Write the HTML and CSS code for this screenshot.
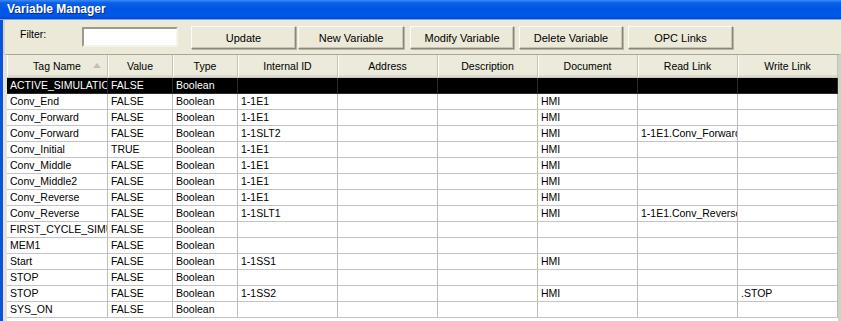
FILE: index.html
```html
<!DOCTYPE html>
<html lang="en">
<head>
  <meta charset="UTF-8" />
  <title>Variable Manager</title>
  <link rel="stylesheet" href="styles.css">
</head>
<body>
  <div class="titlebar">Variable Manager</div>
  <div class="frame">
    <div class="toolbar">
      <label class="filter-label" for="filter">Filter:</label>
      <input type="text" id="filter" class="filter-input" />
      <button class="tb-btn btn-update">Update</button>
      <button class="tb-btn btn-new">New Variable</button>
      <button class="tb-btn btn-modify">Modify Variable</button>
      <button class="tb-btn btn-delete">Delete Variable</button>
      <button class="tb-btn btn-opc">OPC Links</button>
    </div>

    <div class="grid-wrap">
      <table class="grid">
        <colgroup>
          <col class="c-tag" />
          <col class="c-val" />
          <col class="c-type" />
          <col class="c-wide" />
          <col class="c-wide" />
          <col class="c-wide" />
          <col class="c-wide" />
          <col class="c-wide" />
          <col class="c-wide" />
        </colgroup>
        <thead>
          <tr>
            <th class="sorted">Tag Name <span class="sort-arrow"></span></th>
            <th>Value</th>
            <th>Type</th>
            <th>Internal ID</th>
            <th>Address</th>
            <th>Description</th>
            <th>Document</th>
            <th>Read Link</th>
            <th>Write Link</th>
          </tr>
        </thead>
        <tbody>
          <tr class="selected"><td>ACTIVE_SIMULATION</td><td>FALSE</td><td>Boolean</td><td></td><td></td><td></td><td></td><td></td><td></td></tr>
          <tr><td>Conv_End</td><td>FALSE</td><td>Boolean</td><td>1-1E1</td><td></td><td></td><td>HMI</td><td></td><td></td></tr>
          <tr><td>Conv_Forward</td><td>FALSE</td><td>Boolean</td><td>1-1E1</td><td></td><td></td><td>HMI</td><td></td><td></td></tr>
          <tr><td>Conv_Forward</td><td>FALSE</td><td>Boolean</td><td>1-1SLT2</td><td></td><td></td><td>HMI</td><td>1-1E1.Conv_Forward</td><td></td></tr>
          <tr><td>Conv_Initial</td><td>TRUE</td><td>Boolean</td><td>1-1E1</td><td></td><td></td><td>HMI</td><td></td><td></td></tr>
          <tr><td>Conv_Middle</td><td>FALSE</td><td>Boolean</td><td>1-1E1</td><td></td><td></td><td>HMI</td><td></td><td></td></tr>
          <tr><td>Conv_Middle2</td><td>FALSE</td><td>Boolean</td><td>1-1E1</td><td></td><td></td><td>HMI</td><td></td><td></td></tr>
          <tr><td>Conv_Reverse</td><td>FALSE</td><td>Boolean</td><td>1-1E1</td><td></td><td></td><td>HMI</td><td></td><td></td></tr>
          <tr><td>Conv_Reverse</td><td>FALSE</td><td>Boolean</td><td>1-1SLT1</td><td></td><td></td><td>HMI</td><td>1-1E1.Conv_Reverse</td><td></td></tr>
          <tr><td>FIRST_CYCLE_SIMULATION</td><td>FALSE</td><td>Boolean</td><td></td><td></td><td></td><td></td><td></td><td></td></tr>
          <tr><td>MEM1</td><td>FALSE</td><td>Boolean</td><td></td><td></td><td></td><td></td><td></td><td></td></tr>
          <tr><td>Start</td><td>FALSE</td><td>Boolean</td><td>1-1SS1</td><td></td><td></td><td>HMI</td><td></td><td></td></tr>
          <tr><td>STOP</td><td>FALSE</td><td>Boolean</td><td></td><td></td><td></td><td></td><td></td><td></td></tr>
          <tr><td>STOP</td><td>FALSE</td><td>Boolean</td><td>1-1SS2</td><td></td><td></td><td>HMI</td><td></td><td>.STOP</td></tr>
          <tr><td>SYS_ON</td><td>FALSE</td><td>Boolean</td><td></td><td></td><td></td><td></td><td></td><td></td></tr>
        </tbody>
      </table>
    </div>
  </div>
</body>
</html>
```

FILE: styles.css
```css
body { margin: 0; width: 841px; height: 321px; overflow: hidden; background: #d4d0c8;
  font-family: "Liberation Sans", Arial, sans-serif; font-size: 10.5px; color: #000; }

.titlebar { height: 19px; padding-left: 7px; line-height: 19px; color: #fff; font-weight: bold;
  font-size: 12px; text-shadow: 1px 1px 0 #0a2a8a;
  background: linear-gradient(to bottom, #3d8cf5 0%, #0a5fe8 15%, #0055e5 50%, #0058ea 85%, #0048cf 100%);
  border-bottom: 1px solid #7ea3e6; }

.frame { border-left: 3px solid #0b52dc; height: 301px; display: flex; flex-direction: column; }

.toolbar { height: 34px; display: flex; align-items: flex-start; background: #ece9d8;
  border-left: 2px solid #d8d4c4; box-sizing: border-box; padding-top: 6px; }
.filter-label { margin: 2px 0 0 15px; width: 62px; }
.filter-input { width: 96px; height: 20px; margin: 1px 0 0 0; padding: 0; box-sizing: border-box;
  border: 2px solid; border-color: #9d9a8a #f4f3ee #f4f3ee #9d9a8a; background: #fff; }
.tb-btn { height: 23px; padding: 0; font: inherit; font-size: 11px; color: #000; background: #ece9d8;
  border: 1px solid; border-color: #fbfbf8 #8a877a #8a877a #fbfbf8;
  box-shadow: inset -1px -1px 0 #c9c5b4, 1px 1px 0 #b8b4a4; }
.btn-update { width: 105px; margin-left: 13px; }
.btn-new { width: 106px; margin-left: 2px; }
.btn-modify { width: 104px; margin-left: 6px; }
.btn-delete { width: 104px; margin-left: 5px; }
.btn-opc { width: 105px; margin-left: 5px; }

.grid-wrap { flex: 1; background: #fff; border-left: 4px solid #e6e3d6; border-top: 1px solid #a9a697;
  border-right: 3px solid #d4d0c8; overflow: hidden; }
.grid { width: 831px; table-layout: fixed; border-collapse: separate; border-spacing: 0; }
.c-tag { width: 101px; }
.c-val, .c-type { width: 65px; }
.c-wide { width: 100px; }

.grid th { height: 22px; padding: 0; font-weight: normal; text-align: center; background: #ebeadb;
  border-right: 1px solid #c7c3b3; border-bottom: 1px solid #c9c5b4;
  box-shadow: inset 1px 0 0 #fff, inset 0 -2px 0 #dedbcc; white-space: nowrap; }
.grid th.sorted { position: relative; }
.sort-arrow { position: absolute; right: 6px; top: 8px; width: 0; height: 0;
  border-left: 4px solid transparent; border-right: 4px solid transparent; border-bottom: 5px solid #c4c0b0; }

.grid td { height: 15px; padding: 0 0 0 3px; border-right: 1px solid #bdbdbd; border-bottom: 1px solid #c4c4c4;
  white-space: nowrap; overflow: hidden; line-height: 15px; }
.grid tr.selected td { background: #000; color: #fff; border-color: #2a2a2a; }
```
